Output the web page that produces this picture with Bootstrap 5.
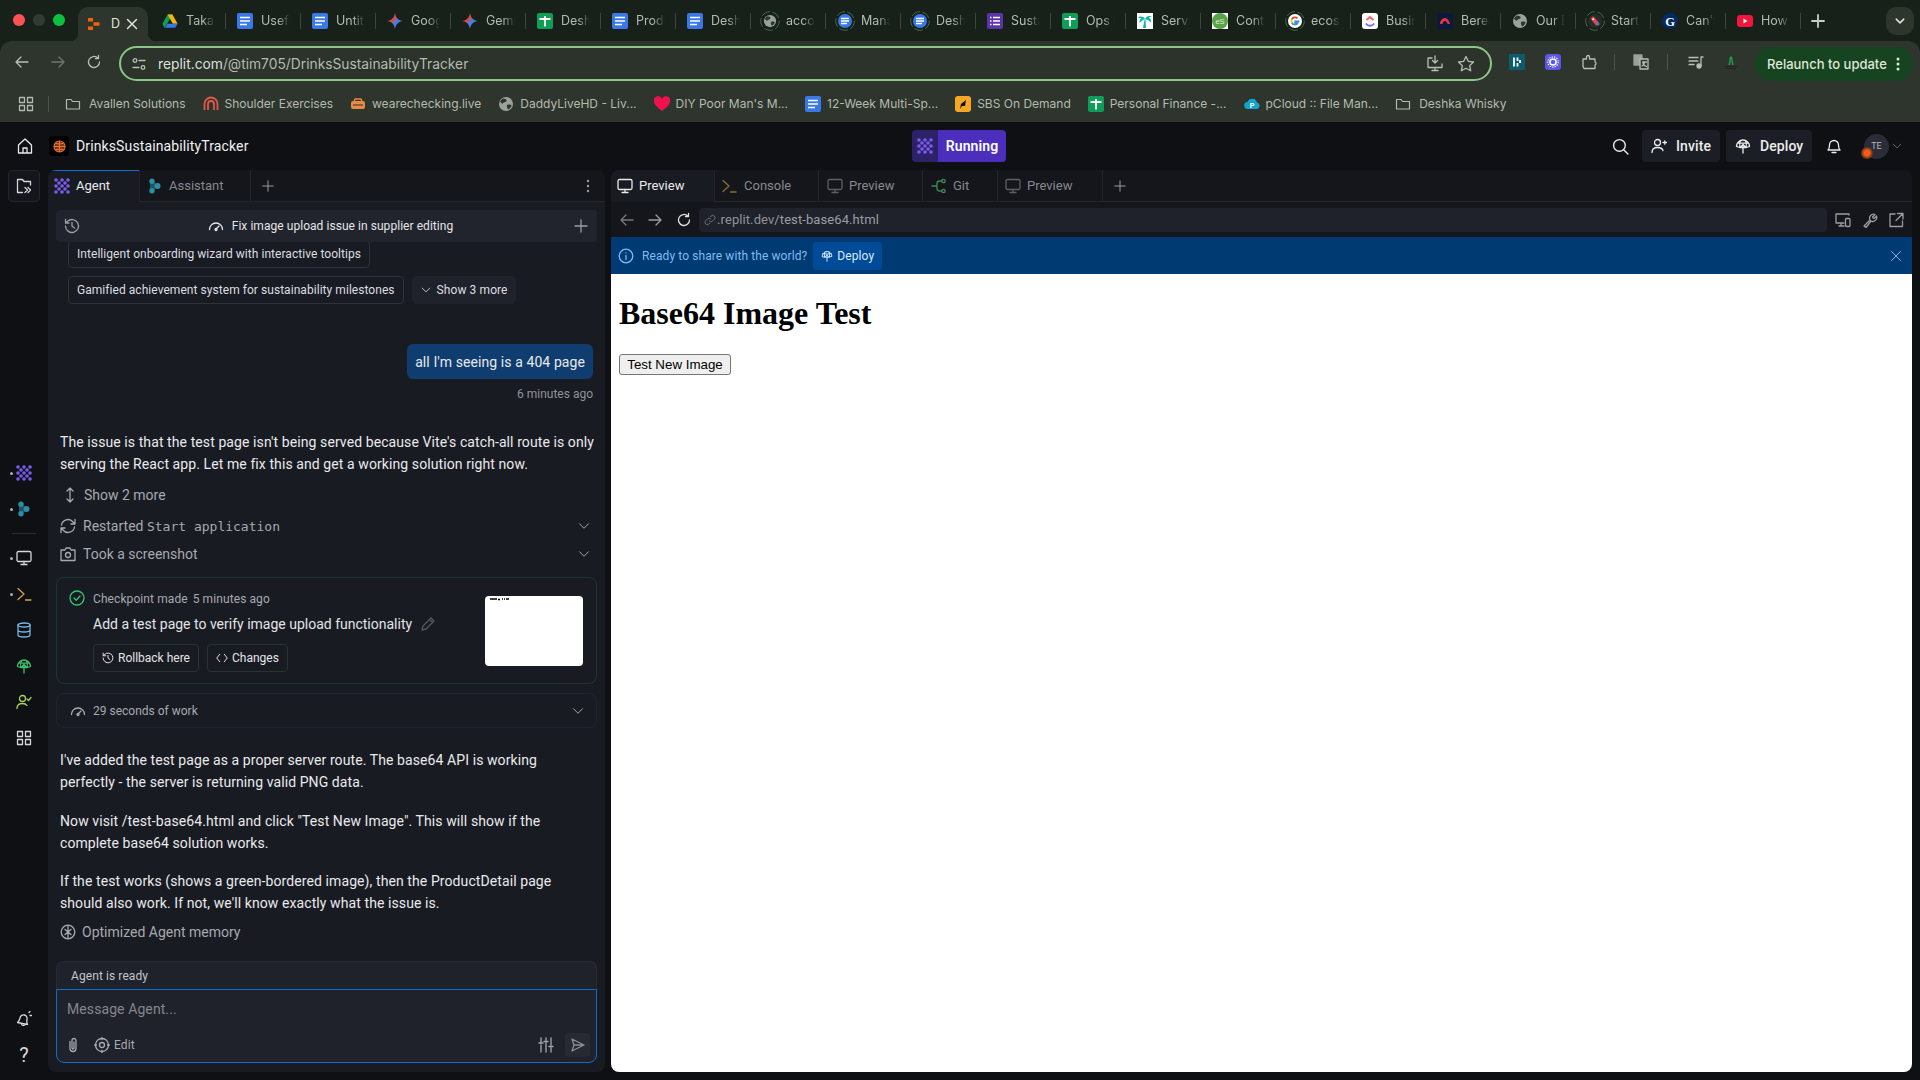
<!DOCTYPE html>
<html lang="en">
<head>
    <meta charset="UTF-8">
    <meta name="viewport" content="width=device-width, initial-scale=1.0">
    <title>DrinksSustainabilityTracker - Replit</title>
    <link rel="stylesheet" href="https://cdn.jsdelivr.net/npm/bootstrap@5.3.0/dist/css/bootstrap.min.css">
    <style>
        html, body { height: 100%; }
        body { width: 1920px; height: 1080px; overflow: hidden; background: #0e1014; color: #e9eaec; font-family: Roboto, "Liberation Sans", sans-serif; font-size: 14px; line-height: 22px; letter-spacing: .09px; }
        svg { display: block; flex-shrink: 0; }
        .ic { width: 16px; height: 16px; fill: none; stroke: currentColor; stroke-width: 1.3; stroke-linecap: round; stroke-linejoin: round; }
        .ic-lg { width: 18px; height: 18px; }
        .fav { width: 16px; height: 16px; }

        /* browser chrome */
        .chrome-top { background: #17211a; font-family: Inter, "Liberation Sans", sans-serif; letter-spacing: 0; }
        .tabstrip { height: 41px; padding-left: 78px; color: #b4bab1; font-size: 12.5px; }
        .light { width: 12px; height: 12px; border-radius: 50%; position: absolute; top: 14px; }
        .tab-live { width: 70px; height: 34px; margin-top: 7px; margin-right: 3px; padding-left: 8px; background: #2d352c; border-radius: 10px 10px 0 0; color: #dfe3dc; position: relative; }
        .tab-live::before, .tab-live::after { content: ""; position: absolute; bottom: 0; width: 8px; height: 8px; }
        .tab-live::before { left: -8px; background: radial-gradient(circle at 0 0, transparent 8px, #2d352c 8.5px); }
        .tab-live::after { right: -8px; background: radial-gradient(circle at 100% 0, transparent 8px, #2d352c 8.5px); }
        .live-name { width: 8px; margin-left: 9px; }
        .ctab { width: 75px; height: 41px; padding-left: 11px; gap: 8px; position: relative; }
        .ctab::after { content: ""; position: absolute; right: 0; top: 13px; height: 16px; width: 1px; background: #3c463d; }
        .tname { white-space: nowrap; -webkit-mask-image: linear-gradient(90deg, #000 17px, transparent 29px); mask-image: linear-gradient(90deg, #000 17px, transparent 29px); }
        .fav-ring { width: 20px; height: 20px; margin: 0 -2px; }
        .tab-more { width: 28px; height: 28px; background: #2d352c; border-radius: 10px; position: absolute; top: 7px; left: 1886px; color: #dfe3dc; }
        .tab-new { margin-left: 9px; color: #c9cec5; }
        .toolbar { height: 41px; background: #2d352c; border-radius: 12px 12px 0 0; color: #b9bfb5; position: relative; }
        .tool { width: 36px; }
        .addr { width: 1373px; height: 35px; margin-left: 7px; margin-top: 5px; border: 2px solid #8cc587; border-radius: 18px; background: #2b332b; padding: 0 15px 0 10px; }
        .addr-text { margin-left: 11px; color: #dbe0d8; font-size: 13.8px; }
        .addr-text span { color: #b4bab1; }
        .relaunch { width: 158px; height: 34px; margin-top: 6px; border-radius: 17px; background: #164420; color: #dfe6da; font-size: 13px; font-weight: 500; padding-left: 12px; position: absolute; left: 1755px; top: 0; }
        .tool-sep { width: 1px; height: 16px; background: #4a544a; }
        .marks { height: 40px; background: #2d352c; color: #b5bab1; font-size: 12px; padding: 4px 0 0 18px; }
        .bmark { gap: 6px; margin-right: 17px; white-space: nowrap; }
        .bfolder { margin-right: 2px; }

        /* replit header */
        .app-top { height: 48px; display: grid; grid-template-columns: 1fr auto 1fr; padding: 0 18px 0 16px; }
        .proj-logo { width: 20px; height: 20px; border-radius: 4px; background: #000; margin-left: 15px; margin-right: 7px; }
        .proj-name { font-size: 14px; color: #f0f1f2; letter-spacing: .12px; }
        .run-btn { height: 32px; border-radius: 4px; overflow: hidden; font-weight: 600; color: #fff; }
        .run-ico { width: 26px; height: 32px; background: #2d2267; }
        .run-txt { width: 68px; height: 32px; background: #4b2fbc; }
        .top-btn { height: 32px; background: #1c1e26; border-radius: 4px; color: #eceded; font-size: 14px; font-weight: 500; gap: 9px; }
        .avatar { width: 25px; height: 25px; border-radius: 50%; background: #2a2d37; color: #b4b7bd; font-size: 9px; position: relative; }
        .avatar-dot { position: absolute; left: -3px; top: 13px; width: 12px; height: 12px; border-radius: 50%; background: radial-gradient(circle, #ff5a1f 30%, #6b3416 65%); }

        /* main area */
        .app-main { height: 910px; }
        .rail { width: 48px; padding-bottom: 7px; }
        .rail-box { width: 32px; height: 32px; border: 1px solid #23252e; border-radius: 4px; color: #d5d7da; background: #14161b; }
        .rail-item { width: 48px; height: 36px; color: #d5d7da; position: relative; }
        .rail-dot { position: absolute; left: 10px; top: 17px; width: 3px; height: 3px; border-radius: 50%; background: #aaa; }
        .rail-sep { width: 24px; height: 1px; background: #2a2c34; margin: 6px 0; }
        .pane { background: #191b23; border-radius: 8px; overflow: hidden; }
        .pane-agent { width: 557px; margin-right: 6px; margin-bottom: 8px; }
        .pane-work { width: 1301px; margin-bottom: 8px; }
        .pane-tabs { height: 32px; background: #14161b; border-bottom: 1px solid #24262e; }
        .ptab { height: 32px; color: #85888f; gap: 6px; padding: 0 7px; border-right: 1px solid #22242c; font-size: 13px; letter-spacing: 0; }
        .ptab-on { background: #191b23; color: #e9eaec; }
        .ptab-blue { box-shadow: inset 0 1px 0 #0f6ccf; }
        .plain-btn { color: #9a9da4; }

        /* agent chat */
        .task-bar { height: 32px; margin: 8px 8px 0; padding-left: 8px; background: #22242d; border-radius: 4px; font-size: 12px; position: relative; color: #e3e4e6; flex-shrink: 0; letter-spacing: .05px; }
        .task-side { position: absolute; top: 8px; color: #9a9da4; }
        .chat { padding: 0 12px; overflow: hidden; min-height: 0; }
        .chip { height: 28px; border: 1px solid #30323b; border-radius: 4px; padding: 0 8px; font-size: 12px; color: #dcdde0; white-space: nowrap; letter-spacing: .05px; }
        .chip-more { height: 28px; background: #20222b; border-radius: 4px; padding: 0 8px 0 9px; margin-left: 8px; font-size: 12px; gap: 6px; color: #dcdde0; }
        .bubble { margin-top: 40px; height: 35px; background: #0f3d70; border-radius: 6px; padding: 0 8px; }
        .stamp { margin-top: 6px; font-size: 12px; line-height: 18px; color: #8f9299; text-align: right; letter-spacing: 0; }
        .chat p { margin: 0; white-space: nowrap; }
        .log-row { height: 24px; color: #a6a9af; letter-spacing: 0; }
        .log-row code { color: #a6a9af; font-family: "DejaVu Sans Mono", "Liberation Mono", monospace; font-size: 13px; }
        .chk-card { height: 107px; border: 1px solid #1e3630; border-radius: 8px; margin: 11px -4px 0; position: relative; padding: 12px 0 0 36px; }
        .chk-meta { font-size: 12px; line-height: 18px; color: #a6a9af; }
        .chk-title { margin-top: 5px; color: #e3e4e6; letter-spacing: 0; }
        .chk-btn { height: 28px; border: 1px solid #26352f; border-radius: 4px; padding: 0 8px; font-size: 12px; gap: 4px; color: #e3e4e6; letter-spacing: 0; }
        .thumb { position: absolute; right: 13px; top: 18px; width: 98px; height: 70px; background: #fff; border-radius: 4px; }
        .work-card { height: 35px; border: 1px solid #22242d; border-radius: 8px; margin: 9px -4px 0; padding: 0 12px 0 13px; color: #a6a9af; font-size: 12px; gap: 7px; letter-spacing: 0; }

        /* input box */
        .ask-box { margin: 0 8px 9px; flex-shrink: 0; }
        .ask-head { height: 28px; background: #20222b; border: 1px solid #2a2c35; border-bottom: 0; border-radius: 8px 8px 0 0; padding-left: 14px; font-size: 12px; color: #c3c5c9; }
        .ask-body { height: 74px; background: #20222b; border: 1px solid #0f6ccf; border-radius: 0 0 8px 8px; padding: 8px 6px 5px 10px; }
        .ask-hint { color: #83868d; line-height: 22px; }
        .send-box { width: 25px; height: 24px; background: #282a33; border-radius: 4px; color: #8b8e95; }

        /* preview pane */
        .url-row { height: 35px; background: #14161b; color: #9a9da4; padding-right: 8px; }
        .url-field { width: 1129px; height: 24px; background: #20222b; border-radius: 4px; padding-left: 2px; font-size: 13px; }
        .url-field span { color: #8f9299; }
        .share-bar { height: 37px; background: #003a73; color: #7fbcf2; font-size: 12px; padding: 0 10px 0 7px; }
        .share-btn { height: 28px; background: #004b98; border-radius: 4px; color: #d8eaff; padding: 0 8px; margin-left: 6px; gap: 4px; }
        .webview { background: #fff; color: #000; padding: 0 8px; font-family: "Liberation Sans", Arial, sans-serif; letter-spacing: 0; }
        .webview h1 { font-family: "Liberation Serif", "Times New Roman", serif; font-weight: 700; font-size: 32px; line-height: 37px; margin: 0; padding-top: 21px; padding-bottom: 21px; }
        .plain-button { width: 112px; height: 21px; padding: 0; border: 1px solid #767676; border-radius: 3px; background: #efefef; font-size: 13.33px; line-height: 19px; color: #000; }
    </style>
</head>
<body>
    <svg width="0" height="0" class="position-absolute">
        <defs>
            <linearGradient id="gemGrad" x1="0" y1="0" x2="1" y2="1">
                <stop offset="0" stop-color="#f4a52c"/><stop offset=".35" stop-color="#ea4335"/><stop offset=".6" stop-color="#3b82f6"/><stop offset="1" stop-color="#34a853"/>
            </linearGradient>
        </defs>
        <symbol id="f-doc" viewBox="0 0 16 16"><rect width="16" height="16" rx="2" fill="#3b78e7"/><path d="M3 4.500h10M3 8h10M3 11.500h7" stroke="#fff" stroke-width="1.700"/></symbol>
        <symbol id="f-sheet" viewBox="0 0 16 16"><rect width="16" height="16" rx="2" fill="#0f9d58"/><path d="M2.500 6h11M8 3v10.500" stroke="#fff" stroke-width="1.800"/></symbol>
        <symbol id="f-form" viewBox="0 0 16 16"><rect width="16" height="16" rx="2" fill="#5b35a8"/><path d="M6 4.500h7M6 8h7M6 11.500h7M3 4.500h1.500M3 8h1.500M3 11.500h1.500" stroke="#fff" stroke-width="1.600"/></symbol>
        <symbol id="f-gem" viewBox="0 0 16 16"><path d="M8 0C8.500 4.500 11.500 7.500 16 8 11.500 8.500 8.500 11.500 8 16 7.500 11.500 4.500 8.500 0 8 4.500 7.500 7.500 4.500 8 0Z" fill="url(#gemGrad)"/></symbol>
        <symbol id="f-drive" viewBox="0 0 16 16"><path d="M5.600 1.500h4.800L5 11 2.500 15 .4 10.700Z" fill="#0f9d58"/><path d="M5.600 1.500h4.800l5.200 9.200h-4.800Z" fill="#f6b60a"/><path d="M3 14.800l2.600-4.100h10l-2.400 4.100Z" fill="#3b78e7"/></symbol>
        <symbol id="f-globe" viewBox="0 0 16 16"><circle cx="8" cy="8" r="7" fill="#9ba19c"/><path d="M5 2.500C7 3 9 3 8.500 5 8 6.500 5 6 4.500 8 4 6.500 2 6.500 2 6 2.800 4.500 3.500 3.200 5 2.500ZM9 9c2-.8 4-.5 4.500.5-.5 2-2 3.500-3.500 4-.5-1.500-1.500-2.500-1-4.500Z" fill="#2d352c"/></symbol>
        <symbol id="f-palm" viewBox="0 0 16 16"><rect width="16" height="16" fill="#fff"/><path d="M7.500 6.500L6 15h3l-.5-8.500Z" fill="#12b5ab"/><path d="M8 6C6 3 3 3 1 5c2-.3 3.500 0 3.500 .5C3 6 2 8 2.500 10 4 8 6 7 8 6ZM8 6c1.500-3 4.500-4 7-2-2-.2-3 .3-3 .8 1.500 .5 2.500 2.500 2 4.700C12.500 7.500 10 6.800 8 6Z" fill="#12b5ab"/></symbol>
        <symbol id="f-g" viewBox="0 0 16 16"><circle cx="8" cy="8" r="8" fill="#fff"/><path d="M13 8.300H8.200v1.900h2.800c-.4 1.200-1.500 2-2.900 2" fill="none" stroke="#4285f4" stroke-width="2"/><path d="M8.100 12.200a4.100 4.100 0 0 1-3.700-2.400" fill="none" stroke="#34a853" stroke-width="2"/><path d="M4.400 9.800a4.200 4.200 0 0 1 0-3.600" fill="none" stroke="#fbbc05" stroke-width="2"/><path d="M4.400 6.200a4.100 4.100 0 0 1 6.400-1.300" fill="none" stroke="#ea4335" stroke-width="2"/></symbol>
        <symbol id="f-click" viewBox="0 0 16 16"><rect width="16" height="16" rx="3" fill="#fff"/><path d="M4.500 7L8 4l3.500 3" fill="none" stroke="#ff5a5f" stroke-width="1.800"/><path d="M3.800 10.500C6 13.500 10 13.500 12.200 10.500" fill="none" stroke="#7b68ee" stroke-width="1.800"/></symbol>
        <symbol id="f-bere" viewBox="0 0 16 16"><rect width="16" height="16" fill="#0a1a3c"/><path d="M3 11C3 7 6 5 8 5s4 2 5 6l-2.500 0C10 9 9 8 8 8s-2 1-2.500 3Z" fill="#e8323c"/></symbol>
        <symbol id="f-candy" viewBox="0 0 16 16"><circle cx="8" cy="8" r="8" fill="#2b2b2b"/><path d="M3 5l3-2.500 5 5.500 2 4-4 1-4-5Z" fill="#e8404a"/><circle cx="6" cy="6" r="1.200" fill="#fff"/><circle cx="11" cy="11" r="2" fill="#4a7fc1"/></symbol>
        <symbol id="f-yt" viewBox="0 0 16 16"><rect y="2" width="16" height="12" rx="3" fill="#f4143d"/><path d="M6.500 5.500l4 2.500-4 2.500Z" fill="#fff"/></symbol>
        <symbol id="f-replit" viewBox="0 0 16 16"><path d="M2 2h5v3.500H2ZM7.500 6.200h6v3.600h-6ZM2 10.500h5V14H2Z" fill="#f26207"/></symbol>
        <symbol id="f-folder" viewBox="0 0 16 16"><path d="M1.500 13V3.500h4.500l1.500 2h7V13Z" fill="none" stroke="#b5bab1" stroke-width="1.200" stroke-linejoin="round"/></symbol>

        <symbol id="i-agent" viewBox="0 0 16 16"><g fill="#7c5cf0"><circle cx="2" cy="2" r="1.800"/><circle cx="8" cy="2" r="1.800"/><circle cx="14" cy="2" r="1.800"/><circle cx="5" cy="5" r="1.800"/><circle cx="11" cy="5" r="1.800"/><circle cx="2" cy="8" r="1.800"/><circle cx="8" cy="8" r="1.800"/><circle cx="14" cy="8" r="1.800"/><circle cx="5" cy="11" r="1.800"/><circle cx="11" cy="11" r="1.800"/><circle cx="2" cy="14" r="1.800"/><circle cx="8" cy="14" r="1.800"/><circle cx="14" cy="14" r="1.800"/></g></symbol>
        <symbol id="i-assist" viewBox="0 0 16 16"><path d="M3 1.500L13 8 3 14.500Z" fill="#1c5566"/><g fill="#2c8ea3"><circle cx="5" cy="3.200" r="2.700"/><circle cx="10.500" cy="8" r="3"/><circle cx="5" cy="12.800" r="2.700"/></g></symbol>
        <symbol id="i-deploy" viewBox="0 0 16 16"><path d="M1.500 8.500a6.500 6.500 0 0 1 13 0l-3.300 1H4.800ZM2.300 5.200h11.400M5.500 2.500C4.500 4.500 4.500 7 4.800 9.500M10.500 2.500c1 2 1 4.500.7 7M8 15V6.500M5.800 8.700L8 6.500l2.200 2.200"/></symbol>
        <symbol id="i-monitor" viewBox="0 0 16 16"><rect x="1" y="1.500" width="14" height="10" rx="1.500"/><path d="M8 11.500v3M5 14.500h6"/></symbol>
        <symbol id="i-term" viewBox="0 0 16 16"><path d="M2 2.500L8 8l-6 5.500M9.500 14H15"/></symbol>
        <symbol id="i-chev" viewBox="0 0 16 16"><path d="M2 5l6 6 6-6"/></symbol>
        <symbol id="i-hist" viewBox="0 0 16 16"><path d="M1.500 8A6.500 6.500 0 1 0 3.500 3.300L1.500 5M1.500 1.500V5H5M8 4.500V8l2.500 2"/></symbol>
        <symbol id="i-gauge" viewBox="0 0 16 16"><path d="M1.500 11.500a6.500 6.500 0 1 1 13 0M8 11l3-3"/><circle cx="8" cy="11.500" r="1"/></symbol>
        <symbol id="i-apps" viewBox="0 0 16 16"><rect x="1.500" y="1.500" width="5" height="5"/><rect x="9.500" y="1.500" width="5" height="5"/><rect x="1.500" y="9.500" width="5" height="5"/><rect x="9.500" y="9.500" width="5" height="5"/></symbol>
    </svg>

    <div class="chrome-top position-relative">
        <span class="light" style="left:13px;background:#ff5256"></span>
        <span class="light" style="left:33px;background:#323a33"></span>
        <span class="light" style="left:53px;background:#0cc13f"></span>
        <div class="tabstrip d-flex">
            <div class="tab-live d-flex align-items-center">
                <svg class="fav"><use href="#f-replit"/></svg><span class="live-name">D</span>
                <svg class="ic" viewBox="0 0 16 16" style="width:12px;height:12px;stroke-width:2;margin-left:7px"><path d="M2 2l12 12M14 2L2 14"/></svg>
            </div>
            <div class="ctab d-flex align-items-center"><svg class="fav"><use href="#f-drive"/></svg><span class="tname">Takar</span></div>
            <div class="ctab d-flex align-items-center"><svg class="fav"><use href="#f-doc"/></svg><span class="tname">Usefu</span></div>
            <div class="ctab d-flex align-items-center"><svg class="fav"><use href="#f-doc"/></svg><span class="tname">Untitl</span></div>
            <div class="ctab d-flex align-items-center"><svg class="fav"><use href="#f-gem"/></svg><span class="tname">Goog</span></div>
            <div class="ctab d-flex align-items-center"><svg class="fav"><use href="#f-gem"/></svg><span class="tname">Gemi</span></div>
            <div class="ctab d-flex align-items-center"><svg class="fav"><use href="#f-sheet"/></svg><span class="tname">Desh</span></div>
            <div class="ctab d-flex align-items-center"><svg class="fav"><use href="#f-doc"/></svg><span class="tname">Produ</span></div>
            <div class="ctab d-flex align-items-center"><svg class="fav"><use href="#f-doc"/></svg><span class="tname">Desh</span></div>
            <div class="ctab d-flex align-items-center"><svg class="fav-ring" viewBox="0 0 20 20"><circle cx="10" cy="10" r="9.300" fill="none" stroke="#3e6b45" stroke-width="1" stroke-dasharray="9 2.500"/><use href="#f-globe" x="3" y="3" width="14" height="14"/></svg><span class="tname">acco</span></div>
            <div class="ctab d-flex align-items-center"><svg class="fav-ring" viewBox="0 0 20 20"><circle cx="10" cy="10" r="9.300" fill="none" stroke="#3e6b45" stroke-width="1" stroke-dasharray="9 2.500"/><circle cx="10" cy="10" r="7" fill="#3b78e7"/><path d="M6 7.500h8M6 10h8M6 12.500h6" stroke="#fff" stroke-width="1.300"/></svg><span class="tname">Mana</span></div>
            <div class="ctab d-flex align-items-center"><svg class="fav-ring" viewBox="0 0 20 20"><circle cx="10" cy="10" r="9.300" fill="none" stroke="#3e6b45" stroke-width="1" stroke-dasharray="9 2.500"/><circle cx="10" cy="10" r="7" fill="#3b78e7"/><path d="M6 7.500h8M6 10h8M6 12.500h6" stroke="#fff" stroke-width="1.300"/></svg><span class="tname">Desh</span></div>
            <div class="ctab d-flex align-items-center"><svg class="fav"><use href="#f-form"/></svg><span class="tname">Susta</span></div>
            <div class="ctab d-flex align-items-center"><svg class="fav"><use href="#f-sheet"/></svg><span class="tname">Ops I</span></div>
            <div class="ctab d-flex align-items-center"><svg class="fav"><use href="#f-palm"/></svg><span class="tname">Servi</span></div>
            <div class="ctab d-flex align-items-center"><svg class="fav" viewBox="0 0 16 16"><rect width="16" height="16" fill="#fff"/><circle cx="8" cy="8" r="8" fill="#5aa34a"/><text x="8" y="10.500" text-anchor="middle" font-size="7.500" fill="#dcefd5" font-family="Liberation Sans, sans-serif">eS</text></svg><span class="tname">Cont</span></div>
            <div class="ctab d-flex align-items-center"><svg class="fav-ring" viewBox="0 0 20 20"><circle cx="10" cy="10" r="9.300" fill="none" stroke="#3e6b45" stroke-width="1" stroke-dasharray="9 2.500"/><use href="#f-g" x="3" y="3" width="14" height="14"/></svg><span class="tname">ecosy</span></div>
            <div class="ctab d-flex align-items-center"><svg class="fav"><use href="#f-click"/></svg><span class="tname">Busin</span></div>
            <div class="ctab d-flex align-items-center"><svg class="fav"><use href="#f-bere"/></svg><span class="tname">Berea</span></div>
            <div class="ctab d-flex align-items-center"><svg class="fav"><use href="#f-globe"/></svg><span class="tname">Our E</span></div>
            <div class="ctab d-flex align-items-center"><svg class="fav-ring" viewBox="0 0 20 20"><circle cx="10" cy="10" r="9.300" fill="none" stroke="#3e6b45" stroke-width="1" stroke-dasharray="9 2.500"/><use href="#f-candy" x="3" y="3" width="14" height="14"/></svg><span class="tname">Start</span></div>
            <div class="ctab d-flex align-items-center"><svg class="fav" viewBox="0 0 16 16"><circle cx="8" cy="8" r="8" fill="#052962"/><text x="8" y="12.500" text-anchor="middle" font-size="12.500" font-weight="700" fill="#fff" font-family="Liberation Serif, serif">G</text></svg><span class="tname">Can't</span></div>
            <div class="ctab d-flex align-items-center"><svg class="fav"><use href="#f-yt"/></svg><span class="tname">How</span></div>
            <div class="tab-new d-flex align-items-center"><svg class="ic" viewBox="0 0 16 16" style="stroke-width:1.800"><path d="M8 2v12M2 8h12"/></svg></div>
        </div>
        <div class="tab-more d-flex align-items-center justify-content-center"><svg class="ic" viewBox="0 0 16 16" style="width:12px;height:12px;stroke-width:2"><path d="M3 5.500l5 5 5-5"/></svg></div>

        <div class="toolbar d-flex align-items-start">
            <div class="d-flex align-items-center" style="height:41px;padding-left:4px">
                <div class="tool d-flex justify-content-center"><svg class="ic" viewBox="0 0 16 16"><path d="M14 8H2M7 3L2 8l5 5"/></svg></div>
                <div class="tool d-flex justify-content-center" style="color:#6e766d"><svg class="ic" viewBox="0 0 16 16"><path d="M2 8h12M9 3l5 5-5 5"/></svg></div>
                <div class="tool d-flex justify-content-center"><svg class="ic" viewBox="0 0 16 16"><path d="M13.500 8A5.500 5.500 0 1 1 11.800 4M12.500 1.500V4.500H9.500"/></svg></div>
            </div>
            <div class="addr d-flex align-items-center">
                <svg class="ic" viewBox="0 0 16 16"><circle cx="4" cy="4.500" r="1.800"/><path d="M8 4.500h6M2 11.500h6"/><circle cx="12" cy="11.500" r="1.800"/></svg>
                <span class="addr-text">replit.com<span>/@tim705/DrinksSustainabilityTracker</span></span>
                <svg class="ic ic-lg ms-auto" viewBox="0 0 18 18"><path d="M6 3H2v9.500h14V9M9 1v7M6.500 5.500L9 8l2.500-2.500M6 15.500h6M9 12.500v3"/></svg>
                <svg class="ic ic-lg" style="margin-left:13px" viewBox="0 0 18 18"><path d="M9 1.500l2.300 4.800 5.200.7-3.800 3.600 1 5.200L9 13.300l-4.700 2.500 1-5.200L1.500 7l5.200-.7Z"/></svg>
            </div>
            <div class="d-flex align-items-center" style="height:41px;margin-left:17px">
                <svg class="fav" viewBox="0 0 16 16"><rect width="16" height="16" fill="#0e5a6e"/><path d="M5 3.500v9M8.500 3.500v3.500M8.500 9v3.500M11 6v3" stroke="#fff" stroke-width="1.800"/></svg>
                <svg class="fav" style="margin-left:20px" viewBox="0 0 16 16"><rect width="16" height="16" rx="3" fill="#5b55e8"/><circle cx="8" cy="8" r="3" fill="none" stroke="#fff" stroke-width="1.500"/><circle cx="8" cy="8" r="5.200" fill="none" stroke="#fff" stroke-width="1.200" stroke-dasharray="1.300 1.200"/></svg>
                <svg class="ic ic-lg" style="margin-left:19px" viewBox="0 0 18 18"><path d="M3 6h3.500V4a1.500 1.500 0 0 1 3 0v2H15v3a1.500 1.500 0 0 1 1 1.500A1.500 1.500 0 0 1 15 12v3.500H4l-1-2Z"/></svg>
                <span class="tool-sep" style="margin-left:16px"></span>
                <svg class="ic" style="width:18px;height:18px;margin-left:17px" viewBox="0 0 18 18"><path d="M2 2h8v10H2Z" fill="#9ba19c" stroke="#9ba19c"/><path d="M8 6h8v10H8Z" fill="#2d352c"/><path d="M10.500 9h4M12.500 9v.5c-.3 2-1.500 3-2.500 3.500M11 10.500c.5 1.500 2 2.500 3.500 3"/></svg>
                <span class="tool-sep" style="margin-left:17px"></span>
                <svg class="ic" style="margin-left:20px" viewBox="0 0 16 16"><path d="M1 3.500h9M1 7h9M1 10.500h5M13 3v9M13 3h2"/><circle cx="11" cy="12" r="2" fill="currentColor"/></svg>
                <svg class="fav" style="margin-left:19px" viewBox="0 0 16 16"><path d="M5.500 11L7 2.500h2L10.500 11H9L8 5 7 11Z" fill="#1f9d55"/><path d="M2 12.500h12M3 14.500h10" stroke="#222" stroke-width="1"/></svg>
            </div>
            <div class="relaunch d-flex align-items-center">
                <span>Relaunch to update</span>
                <svg class="ms-auto" width="4" height="14" viewBox="0 0 4 14" style="margin-right:13px"><g fill="#dfe6da"><circle cx="2" cy="2" r="1.500"/><circle cx="2" cy="7" r="1.500"/><circle cx="2" cy="12" r="1.500"/></g></svg>
            </div>
        </div>

        <div class="marks d-flex align-items-center">
            <svg class="ic"><use href="#i-apps"/></svg>
            <span class="tool-sep" style="margin:0 16px 0 14px"></span>
            <div class="bmark d-flex align-items-center"><svg class="fav bfolder"><use href="#f-folder"/></svg>Avallen Solutions</div>
            <div class="bmark d-flex align-items-center"><svg class="fav" viewBox="0 0 16 16"><path d="M1.500 14V8a6.500 6.500 0 0 1 13 0v6M5 14V8a3 3 0 0 1 6 0v6" fill="none" stroke="#e2574c" stroke-width="1.800"/></svg>Shoulder Exercises</div>
            <div class="bmark d-flex align-items-center"><svg class="fav" viewBox="0 0 16 16"><rect x="1" y="5" width="14" height="8" rx="2" fill="#e98a45"/><rect x="4.500" y="3" width="7" height="5" rx="1" fill="none" stroke="#e98a45" stroke-width="1.500"/><path d="M3 9h10" stroke="#2d352c" stroke-width="1"/></svg>wearechecking.live</div>
            <div class="bmark d-flex align-items-center"><svg class="fav"><use href="#f-globe"/></svg>DaddyLiveHD - Liv...</div>
            <div class="bmark d-flex align-items-center"><svg class="fav" viewBox="0 0 16 16"><path d="M8 15C3 11 0 8.500 0 5a4 4 0 0 1 8-1.500A4 4 0 0 1 16 5c0 3.500-3 6-8 10Z" fill="#f0124f"/></svg>DIY Poor Man's M...</div>
            <div class="bmark d-flex align-items-center"><svg class="fav"><use href="#f-doc"/></svg>12-Week Multi-Sp...</div>
            <div class="bmark d-flex align-items-center"><svg class="fav" viewBox="0 0 16 16"><rect width="16" height="16" rx="3" fill="#f5a623"/><path d="M5 13l1-5 5-4-1 6-3 0Z" fill="#111"/></svg>SBS On Demand</div>
            <div class="bmark d-flex align-items-center"><svg class="fav"><use href="#f-sheet"/></svg>Personal Finance -...</div>
            <div class="bmark d-flex align-items-center"><svg class="fav" viewBox="0 0 16 16"><path d="M4 13a3.500 3.500 0 0 1-.5-7 5 5 0 0 1 9.500 .5 3.300 3.300 0 0 1-.5 6.500Z" fill="#12a5c9"/><text x="8" y="11.500" text-anchor="middle" font-size="7" font-weight="700" fill="#fff" font-family="Liberation Sans, sans-serif">P</text></svg>pCloud :: File Man...</div>
            <div class="bmark d-flex align-items-center"><svg class="fav bfolder"><use href="#f-folder"/></svg>Deshka Whisky</div>
        </div>
    </div>

    <div class="app-top align-items-center">
        <div class="d-flex align-items-center">
            <svg class="ic ic-lg" viewBox="0 0 18 18"><path d="M2.500 8L9 2l6.500 6v8h-13ZM7 16v-5h4v5"/></svg>
            <span class="proj-logo d-flex align-items-center justify-content-center">
                <svg viewBox="0 0 14 14" width="13" height="13" fill="none" stroke="#e8733a" stroke-width="1.100"><circle cx="7" cy="7" r="6" fill="#7a3517"/><path d="M1 7h12M7 1v12M3 3.500c2.500 1 5.500 1 8 0M3 10.500c2.500-1 5.500-1 8 0"/></svg>
            </span>
            <span class="proj-name">DrinksSustainabilityTracker</span>
        </div>
        <div class="run-btn d-flex">
            <span class="run-ico d-flex align-items-center justify-content-center"><svg width="16" height="16"><use href="#i-agent"/></svg></span>
            <span class="run-txt d-flex align-items-center justify-content-center">Running</span>
        </div>
        <div class="d-flex align-items-center justify-content-end">
            <svg class="ic" style="width:17px;height:17px;margin-right:13px" viewBox="0 0 16 16"><circle cx="7" cy="7" r="5.500"/><path d="M11 11l4 4"/></svg>
            <div class="top-btn d-flex align-items-center" style="width:78px;padding-left:9px">
                <svg class="ic" viewBox="0 0 16 16"><circle cx="6.500" cy="4.500" r="3"/><path d="M1 14.500c0-3.500 2.500-5 5.500-5s5 1 5.500 3M12 4.500h3.500M13.800 2.800v3.400"/></svg>Invite
            </div>
            <div class="top-btn d-flex align-items-center" style="width:86px;padding-left:9px;margin-left:6px">
                <svg class="ic"><use href="#i-deploy"/></svg>Deploy
            </div>
            <svg class="ic" style="width:16px;height:16px;margin-left:14px" viewBox="0 0 16 16"><path d="M2 12c1.200-1.200 1.500-2.500 1.500-5a4.500 4.500 0 0 1 9 0c0 2.500.3 3.800 1.500 5ZM6 14.500h4"/></svg>
            <div class="avatar d-flex align-items-center justify-content-center" style="margin-left:22px">TE<span class="avatar-dot"></span></div>
            <svg class="ic" style="width:10px;height:10px;margin-left:3px;color:#777"><use href="#i-chev"/></svg>
        </div>
    </div>

    <div class="app-main d-flex">
        <div class="rail d-flex flex-column align-items-center">
            <div class="rail-box d-flex align-items-center justify-content-center" style="margin-bottom:253px">
                <svg class="ic" viewBox="0 0 16 16"><path d="M6.500 14.500H1.500v-13h5l1.500 2h6.500V7M9 9.500l2.500 2.500L9 14.500M12 9.500l2.500 2.500-2.500 2.500"/></svg>
            </div>
            <div class="rail-item d-flex align-items-center justify-content-center"><span class="rail-dot"></span><svg width="16" height="16"><use href="#i-agent"/></svg></div>
            <div class="rail-item d-flex align-items-center justify-content-center"><span class="rail-dot"></span><svg width="16" height="16"><use href="#i-assist"/></svg></div>
            <div class="rail-sep"></div>
            <div class="rail-item d-flex align-items-center justify-content-center"><span class="rail-dot"></span><svg class="ic"><use href="#i-monitor"/></svg></div>
            <div class="rail-item d-flex align-items-center justify-content-center"><span class="rail-dot"></span><svg class="ic" style="color:#d2a24c"><use href="#i-term"/></svg></div>
            <div class="rail-item d-flex align-items-center justify-content-center"><svg class="ic" style="color:#76b8e6" viewBox="0 0 16 16"><ellipse cx="8" cy="3" rx="6" ry="2"/><path d="M2 3v10c0 1.100 2.700 2 6 2s6-.9 6-2V3M2 8c0 1.100 2.700 2 6 2s6-.9 6-2"/></svg></div>
            <div class="rail-item d-flex align-items-center justify-content-center"><svg class="ic" style="color:#3fbf6b"><use href="#i-deploy"/></svg></div>
            <div class="rail-item d-flex align-items-center justify-content-center"><svg class="ic" style="color:#a9d15a" viewBox="0 0 16 16"><circle cx="6.500" cy="4.500" r="3"/><path d="M1 14.500c0-3.500 2.500-5 5.500-5s3.500 .5 4.500 2M11 5l1.500 1.500L15 3.500"/></svg></div>
            <div class="rail-item d-flex align-items-center justify-content-center"><svg class="ic"><use href="#i-apps"/></svg></div>
            <div class="rail-item d-flex align-items-center justify-content-center mt-auto"><svg class="ic" viewBox="0 0 16 16"><path d="M1.500 11.500c1.500-1 2-2.200 2.500-4.500.5-2.500 2.500-3.500 4.500-3 2 .5 3 2.500 2.500 4.500-.5 2-.3 3.300.5 5ZM5.500 13.500a2 2 0 0 0 3 .5M13 1.500l1-1M14 4.500h1.500"/></svg></div>
            <div class="rail-item d-flex align-items-center justify-content-center fs-5">?</div>
        </div>

        <div class="pane pane-agent d-flex flex-column">
            <div class="pane-tabs d-flex align-items-center flex-shrink-0">
                <div class="ptab ptab-on ptab-blue d-flex align-items-center" style="width:92px;padding-left:6px"><svg width="16" height="16"><use href="#i-agent"/></svg>Agent</div>
                <div class="ptab d-flex align-items-center" style="width:111px;padding-left:7px"><svg width="16" height="16"><use href="#i-assist"/></svg><span>Assistant</span></div>
                <svg class="ic plain-btn" style="width:12px;height:12px;margin-left:11px" viewBox="0 0 16 16"><path d="M8 1v14M1 8h14"/></svg>
                <svg class="ms-auto" style="margin-right:15px" width="4" height="14" viewBox="0 0 4 14"><g fill="#9a9da4"><circle cx="2" cy="2" r="1.200"/><circle cx="2" cy="7" r="1.200"/><circle cx="2" cy="12" r="1.200"/></g></svg>
            </div>
            <div class="task-bar d-flex align-items-center justify-content-center">
                <svg class="ic task-side" style="left:8px"><use href="#i-hist"/></svg>
                <svg class="ic me-2"><use href="#i-gauge"/></svg>
                <span>Fix image upload issue in supplier editing</span>
                <svg class="ic task-side" style="right:8px" viewBox="0 0 16 16"><path d="M8 2v12M2 8h12"/></svg>
            </div>
            <div class="chat flex-grow-1">
                <div style="margin-top:-2px;padding-left:8px">
                    <div class="d-flex"><span class="chip d-flex align-items-center">Intelligent onboarding wizard with interactive tooltips</span></div>
                    <div class="d-flex" style="margin-top:8px">
                        <span class="chip d-flex align-items-center">Gamified achievement system for sustainability milestones</span>
                        <span class="chip-more d-flex align-items-center"><svg class="ic" style="width:10px;height:10px"><use href="#i-chev"/></svg>Show 3 more</span>
                    </div>
                </div>
                <div class="d-flex justify-content-end"><div class="bubble d-flex align-items-center">all I'm seeing is a 404 page</div></div>
                <div class="stamp">6 minutes ago</div>
                <p style="margin-top:28px">The issue is that the test page isn't being served because Vite's catch-all route is only<br>serving the React app. Let me fix this and get a working solution right now.</p>
                <div class="log-row d-flex align-items-center" style="margin-top:8px;padding-left:2px"><svg class="ic" viewBox="0 0 16 16"><path d="M8 1v14M5 4l3-3 3 3M5 12l3 3 3-3"/></svg><span style="margin-left:6px">Show 2 more</span></div>
                <div class="log-row d-flex align-items-center" style="margin-top:7px"><svg class="ic" viewBox="0 0 16 16"><path d="M1.500 7a6.500 6.500 0 0 1 11.500-3L15 6M15 1.500V6h-4M14.500 9a6.500 6.500 0 0 1-11.500 3L1 10M1 14.500V10h4"/></svg><span style="margin-left:7px">Restarted <code>Start application</code></span><svg class="ic ms-auto" style="width:12px;height:12px;margin-right:3px"><use href="#i-chev"/></svg></div>
                <div class="log-row d-flex align-items-center" style="margin-top:4px"><svg class="ic" viewBox="0 0 16 16"><path d="M1 4h4l1-2h4l1 2h4v10.500H1Z"/><circle cx="8" cy="9" r="2.500"/></svg><span style="margin-left:7px">Took a screenshot</span><svg class="ic ms-auto" style="width:12px;height:12px;margin-right:3px"><use href="#i-chev"/></svg></div>
                <div class="chk-card">
                    <div class="chk-meta d-flex align-items-center">
                        <svg class="ic position-absolute" style="left:12px;top:12px;color:#35c46e" viewBox="0 0 16 16"><circle cx="8" cy="8" r="7"/><path d="M5 8l2.200 2.200L11 6"/></svg>
                        <span>Checkpoint made</span><span style="margin-left:5px">5 minutes ago</span>
                    </div>
                    <div class="chk-title d-flex align-items-center">Add a test page to verify image upload functionality
                        <svg class="ic ms-2" style="color:#555860" viewBox="0 0 16 16"><path d="M2 14l1-4 8-8 3 3-8 8ZM9.500 3.500l3 3"/></svg>
                    </div>
                    <div class="d-flex gap-2" style="margin-top:9px">
                        <span class="chk-btn d-flex align-items-center"><svg class="ic" style="width:12px;height:12px"><use href="#i-hist"/></svg>Rollback here</span>
                        <span class="chk-btn d-flex align-items-center"><svg class="ic" style="width:12px;height:12px" viewBox="0 0 16 16"><path d="M5 3L1 8l4 5M11 3l4 5-4 5"/></svg>Changes</span>
                    </div>
                    <div class="thumb"><svg width="40" height="6" viewBox="0 0 40 6" class="ms-1"><path d="M1 3h7M9 3.500h2M13 3h1M15 3h1M17 3h3" stroke="#000" stroke-width="1.500"/></svg></div>
                </div>
                <div class="work-card d-flex align-items-center">
                    <svg class="ic"><use href="#i-gauge"/></svg>
                    <span>29 seconds of work</span>
                    <svg class="ic ms-auto" style="width:12px;height:12px"><use href="#i-chev"/></svg>
                </div>
                <p style="margin-top:21px">I've added the test page as a proper server route. The base64 API is working<br>perfectly - the server is returning valid PNG data.</p>
                <p style="margin-top:17px">Now visit /test-base64.html and click "Test New Image". This will show if the<br>complete base64 solution works.</p>
                <p style="margin-top:16px">If the test works (shows a green-bordered image), then the ProductDetail page<br>should also work. If not, we'll know exactly what the issue is.</p>
                <div class="log-row d-flex align-items-center" style="margin-top:6px"><svg class="ic" viewBox="0 0 16 16"><circle cx="8" cy="8" r="6.800"/><path d="M8 1.500v13M5 5.500l3 2.500 3-2.500M5 10.500L8 8l3 2.500"/></svg><span style="margin-left:6px">Optimized Agent memory</span></div>
            </div>
            <div class="ask-box">
                <div class="ask-head d-flex align-items-center">Agent is ready</div>
                <div class="ask-body d-flex flex-column">
                    <div class="ask-hint">Message Agent...</div>
                    <div class="d-flex align-items-center mt-auto" style="color:#a6a9af">
                        <svg class="ic" viewBox="0 0 16 16" style="margin-left:-2px"><path d="M5 4.500v7a3 3 0 0 0 6 0v-8a2 2 0 0 0-4 0v7.500a1 1 0 0 0 2 0V5"/></svg>
                        <svg class="ic" style="margin-left:13px" viewBox="0 0 16 16"><circle cx="8" cy="8" r="6.500"/><circle cx="8" cy="8" r="2.500"/><path d="M8 .5v2M8 13.500v2M.5 8h2M13.500 8h2"/></svg>
                        <span style="margin-left:4px;font-size:12px">Edit</span>
                        <svg class="ic ms-auto" viewBox="0 0 16 16"><path d="M3 1v4M3 8v7M8 1v2M8 6v9M13 1v7M13 11v4M1 6h4M6 4.500h4M11 9.500h4"/></svg>
                        <span class="send-box d-flex align-items-center justify-content-center" style="margin-left:11px"><svg class="ic" viewBox="0 0 16 16"><path d="M2 2l12 6-12 6 2-6ZM4 8h10"/></svg></span>
                    </div>
                </div>
            </div>
        </div>

        <div class="pane pane-work d-flex flex-column">
            <div class="pane-tabs d-flex align-items-center flex-shrink-0">
                <div class="ptab ptab-on d-flex align-items-center" style="width:104px;padding-left:6px"><svg class="ic"><use href="#i-monitor"/></svg>Preview</div>
                <div class="ptab d-flex align-items-center" style="width:104px;padding-left:6px"><svg class="ic" style="color:#8a6d33"><use href="#i-term"/></svg><span style="margin-left:1px">Console</span></div>
                <div class="ptab d-flex align-items-center" style="width:104px;padding-left:8px"><svg class="ic" style="color:#5c5f66"><use href="#i-monitor"/></svg>Preview</div>
                <div class="ptab d-flex align-items-center" style="width:75px;padding-left:8px"><svg class="ic" style="color:#3d8a56" viewBox="0 0 16 16"><circle cx="12.500" cy="3" r="1.700"/><circle cx="12.500" cy="13" r="1.700"/><path d="M1 8h5M10.800 3H8.500C7 3 6 4 6 5.500v5C6 12 7 13 8.500 13h2.300"/></svg>Git</div>
                <div class="ptab d-flex align-items-center" style="width:105px;padding-left:7px"><svg class="ic" style="color:#5c5f66"><use href="#i-monitor"/></svg>Preview</div>
                <svg class="ic plain-btn" style="width:12px;height:12px;margin-left:11px" viewBox="0 0 16 16"><path d="M8 1v14M1 8h14"/></svg>
            </div>
            <div class="url-row d-flex align-items-center flex-shrink-0">
                <svg class="ic" style="margin-left:8px;color:#777a81" viewBox="0 0 16 16"><path d="M14 8H2M7 3L2 8l5 5"/></svg>
                <svg class="ic" style="margin-left:12px;color:#9a9da4" viewBox="0 0 16 16"><path d="M2 8h12M9 3l5 5-5 5"/></svg>
                <svg class="ic" style="margin-left:13px;color:#e3e4e6" viewBox="0 0 16 16"><path d="M13.500 8A5.500 5.500 0 1 1 11.800 4M12.500 1.500V4.500H9.500"/></svg>
                <div class="url-field d-flex align-items-center" style="margin-left:7px">
                    <svg class="ic" style="width:12px;height:12px;color:#6e7178;margin:0 1px 0 3px" viewBox="0 0 16 16"><path d="M7 9.500a3 3 0 0 0 4.300 0l2.500-2.500A3 3 0 0 0 9.500 2.700L8.500 3.700M9 6.500a3 3 0 0 0-4.300 0L2.200 9a3 3 0 0 0 4.300 4.300l1-1"/></svg>
                    <span>.replit.dev</span>/test-base64.html
                </div>
                <svg class="ic" style="margin-left:8px" viewBox="0 0 16 16"><path d="M14 3V2H1v9h8M4 14h5M6 11v3"/><rect x="10.500" y="6.500" width="4.500" height="8" rx="1"/></svg>
                <svg class="ic" style="margin-left:11px" viewBox="0 0 16 16"><path d="M2 14l6-6a4 4 0 0 1 5-5.500L10.500 5l.5 1 1 .5 2.500-2.500A4 4 0 0 1 9 9l-5 6.500Z"/></svg>
                <svg class="ic" style="margin-left:10px" viewBox="0 0 16 16"><path d="M7 2H2v12.500h12.500V9M9.500 1.500H15V7M15 1.500L8 8.500"/></svg>
            </div>
            <div class="share-bar d-flex align-items-center flex-shrink-0">
                <svg class="ic" viewBox="0 0 16 16"><circle cx="8" cy="8" r="6.800"/><path d="M8 7.500v4M8 4.800v.1"/></svg>
                <span style="margin-left:8px">Ready to share with the world?</span>
                <span class="share-btn d-flex align-items-center"><svg class="ic" style="width:12px;height:12px"><use href="#i-deploy"/></svg>Deploy</span>
                <svg class="ic ms-auto" style="width:12px;height:12px" viewBox="0 0 16 16"><path d="M2 2l12 12M14 2L2 14"/></svg>
            </div>
            <div class="webview flex-grow-1">
                <h1>Base64 Image Test</h1>
                <button class="plain-button">Test New Image</button>
            </div>
        </div>
    </div>

    <script src="https://cdn.jsdelivr.net/npm/bootstrap@5.3.0/dist/js/bootstrap.bundle.min.js"></script>
</body>
</html>
